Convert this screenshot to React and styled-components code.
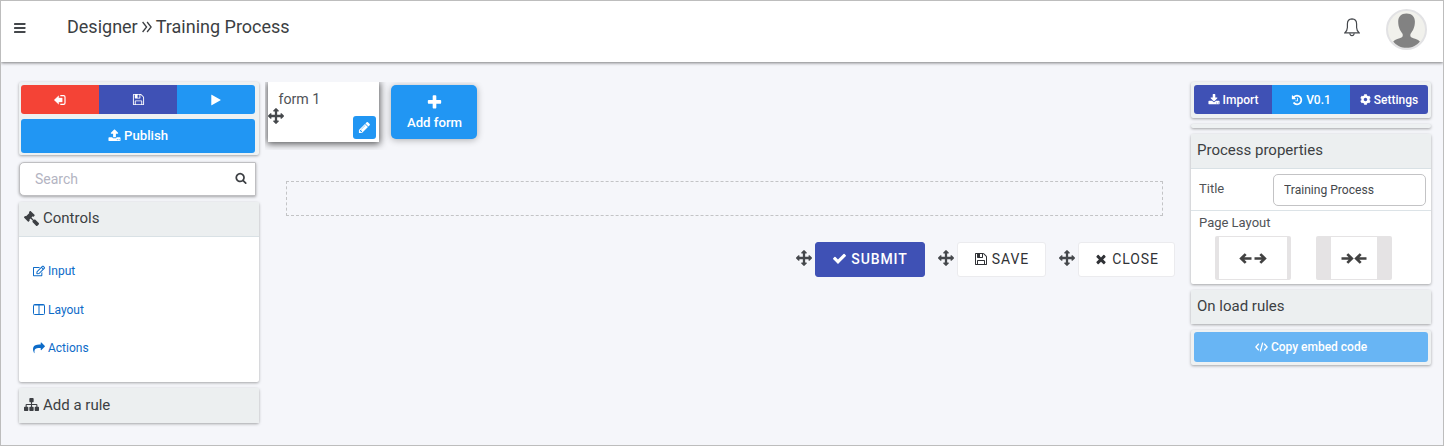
import React from "react";
import styled, { createGlobalStyle } from "styled-components";
import { FaGavel, FaRegEdit, FaCog } from "react-icons/fa";

const GlobalStyle = createGlobalStyle`
  *, *::before, *::after { box-sizing: border-box; }
  body { margin: 0; font-family: Roboto, "Liberation Sans", sans-serif; color: #3c3f43; }
  button { font-family: inherit; cursor: pointer; }
`;

const blue = "#2196f3";
const indigo = "#3f51b5";
const red = "#f44336";
const panelShadow = "0 1px 3px rgba(0,0,0,.34)";

/* ---------- icons ---------- */

const paths = {
  move: "M1792 896q0 26-19 45l-256 256q-19 19-45 19t-45-19-19-45v-128h-384v384h128q26 0 45 19t19 45-19 45l-256 256q-19 19-45 19t-45-19l-256-256q-19-19-19-45t19-45 45-19h128v-384h-384v128q0 26-19 45t-45 19-45-19l-256-256q-19-19-19-45t19-45l256-256q19-19 45-19t45 19 19 45v128h384v-384h-128q-26 0-45-19t-19-45 19-45l256-256q19-19 45-19t45 19l256 256q19 19 19 45t-19 45-45 19h-128v384h384v-128q0-26 19-45t45-19 45 19l256 256q19 19 19 45z",
  save: "M512 1536h768v-384h-768v384zm896 0h128v-896q0-14-10-38.5t-20-34.5l-281-281q-10-10-34-20t-39-10v416q0 40-28 68t-68 28h-576q-40 0-68-28t-28-68v-416h-128v1280h128v-416q0-40 28-68t68-28h832q40 0 68 28t28 68v416zm-384-928v-320q0-13-9.5-22.5t-22.5-9.5h-192q-13 0-22.5 9.5t-9.5 22.5v320q0 13 9.5 22.5t22.5 9.5h192q13 0 22.5-9.5t9.5-22.5zm640 32v928q0 40-28 68t-68 28h-1344q-40 0-68-28t-28-68v-1344q0-40 28-68t68-28h928q40 0 88 20t76 48l280 280q28 28 48 76t20 88z",
  check: "M1671 566q0 40-28 68l-724 724-136 136q-28 28-68 28t-68-28l-136-136-362-362q-28-28-28-68t28-68l136-136q28-28 68-28t68 28l294 295 656-657q28-28 68-28t68 28l136 136q28 28 28 68z",
  times: "M1490 1322q0 40-28 68l-136 136q-28 28-68 28t-68-28l-294-294-294 294q-28 28-68 28t-68-28l-136-136q-28-28-28-68t28-68l294-294-294-294q-28-28-28-68t28-68l136-136q28-28 68-28t68 28l294 294 294-294q28-28 68-28t68 28l136 136q28 28 28 68t-28 68l-294 294 294 294q28 28 28 68z",
  plus: "M1600 736v192q0 40-28 68t-68 28h-416v416q0 40-28 68t-68 28h-192q-40 0-68-28t-28-68v-416h-416q-40 0-68-28t-28-68v-192q0-40 28-68t68-28h416v-416q0-40 28-68t68-28h192q40 0 68 28t28 68v416h416q40 0 68 28t28 68z",
  search: "M1216 832q0-185-131.5-316.5t-316.5-131.5-316.5 131.5-131.5 316.5 131.5 316.5 316.5 131.5 316.5-131.5 131.5-316.5zm512 832q0 52-38 90t-90 38q-54 0-90-38l-343-342q-179 124-399 124-143 0-273.5-55.5t-225-150-150-225-55.5-273.5 55.5-273.5 150-225 225-150 273.5-55.5 273.5 55.5 225 150 150 225 55.5 273.5q0 220-124 399l343 343q37 37 37 90z",
  share: "M1792 640q0 26-19 45l-512 512q-19 19-45 19t-45-19-19-45v-256h-224q-98 0-175.5 6t-154 21.5-133 42.5-105.5 69.5-80 101-48.5 138.5-17.5 181q0 55 5 123 0 6 2.5 23.5t2.5 26.5q0 15-8.5 25t-23.5 10q-16 0-28-17-7-9-13-22t-13.5-30-10.5-24q-127-285-127-451 0-199 53-333 162-403 875-403h224v-256q0-26 19-45t45-19 45 19l512 512q19 19 19 45z",
  sitemap: "M1792 1248v320q0 40-28 68t-68 28h-320q-40 0-68-28t-28-68v-320q0-40 28-68t68-28h96v-192h-512v192h96q40 0 68 28t28 68v320q0 40-28 68t-68 28h-320q-40 0-68-28t-28-68v-320q0-40 28-68t68-28h96v-192h-512v192h96q40 0 68 28t28 68v320q0 40-28 68t-68 28h-320q-40 0-68-28t-28-68v-320q0-40 28-68t68-28h96v-192q0-52 38-90t90-38h512v-192h-96q-40 0-68-28t-28-68v-320q0-40 28-68t68-28h320q40 0 68 28t28 68v320q0 40-28 68t-68 28h-96v192h512q52 0 90 38t38 90v192h96q40 0 68 28t28 68z",
  upload: "M1344 1472q0-26-19-45t-45-19-45 19-19 45 19 45 45 19 45-19 19-45zm256 0q0-26-19-45t-45-19-45 19-19 45 19 45 45 19 45-19 19-45zm128-224v320q0 40-28 68t-68 28h-1472q-40 0-68-28t-28-68v-320q0-40 28-68t68-28h427q21 56 70.5 92t110.5 36h256q61 0 110.5-36t70.5-92h427q40 0 68 28t28 68zm-325-648q-17 40-59 40h-256v448q0 26-19 45t-45 19h-256q-26 0-45-19t-19-45v-448h-256q-42 0-59-40-17-39 14-69l448-448q18-19 45-19t45 19l448 448q31 30 14 69z",
  download: "M1344 1344q0-26-19-45t-45-19-45 19-19 45 19 45 45 19 45-19 19-45zm256 0q0-26-19-45t-45-19-45 19-19 45 19 45 45 19 45-19 19-45zm128-224v320q0 40-28 68t-68 28h-1472q-40 0-68-28t-28-68v-320q0-40 28-68t68-28h465l135 136q58 56 136 56t136-56l136-136h464q40 0 68 28t28 68zm-325-569q17 41-14 70l-448 448q-18 19-45 19t-45-19l-448-448q-31-29-14-70 17-39 59-39h256v-448q0-26 19-45t45-19h256q26 0 45 19t19 45v448h256q42 0 59 39z",
  play: "M1576 927l-1328 738q-23 13-39.5 3t-16.5-36v-1472q0-26 16.5-36t39.5 3l1328 738q23 13 23 31t-23 31z",
  pencil: "M491 1536l91-91-235-235-91 91v107h128v128h107zm523-928q0-22-22-22-10 0-17 7l-542 542q-7 7-7 17 0 22 22 22 10 0 17-7l542-542q7-7 7-17zm-54-192l416 416-832 832h-416v-416zm683 96q0 53-37 90l-166 166-416-416 166-165q36-38 90-38 53 0 91 38l235 234q37 39 37 91z",
  history: "M1664 896q0 156-61 298t-164 245-245 164-298 61q-172 0-327-72.5t-264-204.5q-7-10-6.5-22.5t8.5-20.5l137-138q10-9 25-9 16 2 23 12 73 95 179 147t225 52q104 0 198.5-40.5t163.5-109.5 109.5-163.5 40.5-198.5-40.5-198.5-109.5-163.5-163.5-109.5-198.5-40.5q-98 0-188 35.5t-160 101.5l137 138q31 30 14 69-17 40-59 40h-448q-26 0-45-19t-19-45v-448q0-42 40-59 39-17 69 14l130 129q107-101 244.5-156.5t284.5-55.5q156 0 298 61t245 164 164 245 61 298zm-640-288v448q0 14-9 23t-23 9h-320q-14 0-23-9t-9-23v-64q0-14 9-23t23-9h224v-352q0-14 9-23t23-9h64q14 0 23 9t9 23z",
};

const Svg = styled.svg`
  display: block;
  flex: none;
`;

const MirroredGavel = styled(FaGavel)`
  flex: none;
  transform: scaleX(-1);
`;

const Icon = ({ name, size = 14 }) => (
  <Svg width={size} height={size} viewBox="0 0 1792 1792" fill="currentColor">
    <path d={paths[name]} />
  </Svg>
);

const MenuIcon = () => (
  <Svg width="12" height="10" viewBox="0 0 12 10" fill="#44474b">
    <rect width="11.500" height="1.900" rx=".4" />
    <rect y="4" width="11.500" height="1.900" rx=".4" />
    <rect y="8" width="11.500" height="1.900" rx=".4" />
  </Svg>
);

const ChevronsIcon = () => (
  <Svg width="10" height="12" viewBox="0 0 10 12" fill="none" stroke="currentColor" strokeWidth="1.3">
    <path d="M.6 1l4 5-4 5M5.1 1l4 5-4 5" />
  </Svg>
);

const BellIcon = () => (
  <Svg width="16" height="19" viewBox="0 0 16 19" fill="none" stroke="#45484c" strokeWidth="1.2">
    <path d="M8 .9C4.9 1 3.4 3.2 3.4 6v3.5c0 2.3-.8 3.7-2.6 5.4h14.4c-1.800-1.700-2.600-3.100-2.600-5.400V6C12.600 3.200 11.100 1 8 .9z" />
    <path d="M5.800 15.200c.2 1.700 1 2.500 2.200 2.500s2-.8 2.200-2.500" />
  </Svg>
);

const AvatarIcon = () => (
  <Svg width="41" height="41" viewBox="0 0 41 41">
    <circle cx="20.500" cy="20.500" r="19.500" fill="#f1f1ec" stroke="#e2e2e4" strokeWidth="2" />
    <path
      d="M20.500 4.500c-5.400 0-8.300 3.400-8.300 8.100 0 5.700 2 9.200 4 11.600.8 1 .9 3.300-.3 4-2.700 1.400-6.700 1.800-8.700 4.300 3.200 4.100 8 6.300 13.300 6.300s10.200-2.200 13.400-6.300c-2-2.500-6-2.900-8.700-4.300-1.200-.7-1.100-3-.3-4 2-2.400 4-5.900 4-11.600 0-4.700-3-8.100-8.400-8.100z"
      fill="#828282"
    />
  </Svg>
);

const ExitIcon = () => (
  <Svg width="12" height="10" viewBox="0 0 12 10">
    <path d="M.2 5l4.500-4.200v2.300h3.500v3.800H4.700v2.300z" fill="#fff" stroke="#fff" strokeWidth=".4" strokeLinejoin="round" />
    <path d="M6.300.7h3.300c.8 0 1.400.5 1.400 1.300v6c0 .8-.6 1.300-1.400 1.300H6.300" fill="none" stroke="#fff" strokeWidth="1.200" />
  </Svg>
);

const ColumnsIcon = () => (
  <Svg width="12" height="11" viewBox="0 0 12 11" fill="none" stroke="currentColor">
    <rect x=".5" y=".5" width="11" height="10" rx="1" />
    <path d="M6 1v9.500M1 1h10" />
  </Svg>
);

const CodeIcon = () => (
  <Svg width="13" height="10" viewBox="0 0 13 10" fill="none" stroke="currentColor" strokeWidth="1.300">
    <path d="M3.800 1.700L.9 5l2.900 3.300M9.200 1.700L12.100 5 9.200 8.300M7.700.6L5.300 9.400" />
  </Svg>
);

const ArrowIcon = ({ right }) => (
  <Svg width="13" height="11" viewBox="0 0 13 11" fill="none" stroke="#424242" strokeWidth="2.700">
    <path d={right ? "M.5 5.500h9.500M6.300 1.100l4.500 4.400-4.500 4.400" : "M12.500 5.500H3M6.700 1.100L2.200 5.500l4.500 4.400"} />
    <path d={right ? "M8 3.500l3.500 2L8 7.500z" : "M5 3.500l-3.500 2L5 7.500z"} fill="#424242" stroke="none" />
  </Svg>
);

/* ---------- page frame ---------- */

const Page = styled.div`
  width: 1444px;
  height: 446px;
  border: 1px solid #bdbdbd;
  background: #f5f6fa;
  overflow: hidden;
  display: flex;
  flex-direction: column;
`;

const Header = styled.header`
  flex: none;
  height: 61px;
  padding: 0 16px 5px 13px;
  display: flex;
  align-items: center;
  background: #fff;
  box-shadow: 0 1px 3px rgba(0, 0, 0, 0.5);
`;

const Title = styled.h1`
  margin: -4px auto 0 41px;
  display: flex;
  align-items: center;
  gap: 4px;
  font-size: 18px;
  line-height: 24px;
  font-weight: 400;
  white-space: nowrap;
`;

const HeaderMenu = styled.div`
  margin-top: -2px;
`;

const Bell = styled.div`
  margin: -3px 26px 0 0;
`;

const Workspace = styled.div`
  flex: 1;
  display: grid;
  grid-template-columns: 240px 920px 240px;
  column-gap: 6px;
  padding: 20px 0 0 18px;
  align-items: start;
`;

const Side = styled.aside`
  display: flex;
  flex-direction: column;
  gap: 6px;
`;

const Panel = styled.section`
  height: ${(p) => p.$h}px;
  flex: none;
  background: ${(p) => p.$bg || "#eef1f2"};
  border-radius: 2px;
  box-shadow: ${panelShadow};
`;

const ButtonPanel = styled(Panel)`
  padding: ${(p) => p.$pad || "3px 4px 0 2px"};
  display: flex;
  flex-direction: column;
  gap: 5px;
`;

const Segments = styled.div`
  display: grid;
  grid-template-columns: 1fr 1fr 1fr;
  height: 29px;
  border-radius: 3px;
  overflow: hidden;
`;

const Segment = styled.button`
  border: 0;
  padding: 0;
  display: flex;
  align-items: center;
  justify-content: center;
  gap: 3px;
  color: #fff;
  background: ${(p) => p.$color};
  font-size: 12px;
  font-weight: 500;
  white-space: nowrap;
`;

const WideButton = styled(Segment)`
  height: ${(p) => p.$h}px;
  padding-bottom: ${(p) => p.$lift || 0}px;
  border-radius: 3px;
  font-size: ${(p) => p.$size}px;
`;

const SearchBox = styled.label`
  height: 34px;
  margin: 1px 3px 0 0;
  padding: 0 8px 2px 15px;
  display: flex;
  align-items: center;
  justify-content: space-between;
  background: #fff;
  border: 1px solid #bfbfc2;
  border-radius: 5px 1px 1px 5px;
  box-shadow: ${panelShadow};
`;

const SearchInput = styled.input`
  width: 160px;
  padding: 2px 0 0;
  border: 0;
  outline: 0;
  background: none;
  font: 400 14px/20px Roboto, sans-serif;
  &::placeholder { color: #b3b4c2; opacity: 1; }
`;

const PanelHeading = styled.h2`
  margin: 0;
  height: ${(p) => p.$h || 35}px;
  padding: 0 6px ${(p) => p.$lift || 2}px ${(p) => p.$left || 5}px;
  display: flex;
  align-items: center;
  gap: 4px;
  background: #eceff0;
  font-size: 15px;
  font-weight: 400;
  white-space: nowrap;
  border-bottom: ${(p) => (p.$line ? "1px solid #d9e1e5" : "0")};
`;

const ControlList = styled.nav`
  padding: 22px 14px 0;
  display: flex;
  flex-direction: column;
  gap: 14.500px;
`;

const ControlLink = styled.a`
  height: 24px;
  display: flex;
  align-items: center;
  gap: 3px;
  color: #0d6bc8;
  font-size: 12px;
  white-space: nowrap;
`;

/* ---------- canvas ---------- */

const Canvas = styled.main`
  display: flex;
  flex-direction: column;
`;

const FormStrip = styled.div`
  height: 68px;
  padding: 0 3px;
  display: flex;
  gap: 12px;
  overflow: hidden;
`;

const FormCard = styled.div`
  position: relative;
  width: 111px;
  height: 60px;
  padding: 8px 0 0 10.500px;
  background: #fff;
  box-shadow: 0 1px 7px 1px rgba(0, 0, 0, 0.65);
  font-size: 14.200px;
  line-height: 18px;
  color: #505357;
`;

const CardHandle = styled.span`
  position: absolute;
  left: 0;
  top: 26px;
  color: #45484c;
`;

const EditButton = styled.button`
  position: absolute;
  right: 3px;
  bottom: 3px;
  width: 23px;
  height: 23px;
  padding: 0;
  display: grid;
  place-items: center;
  border: 0;
  border-radius: 3px;
  color: #fff;
  background: ${blue};
`;

const AddForm = styled.button`
  width: 86px;
  height: 54px;
  margin-top: 3px;
  padding: 9px 0 0 1px;
  display: flex;
  flex-direction: column;
  align-items: center;
  gap: 1px;
  border: 0;
  border-radius: 5px;
  color: #fff;
  background: ${blue};
  box-shadow: 0 1px 7px rgba(0, 0, 0, 0.3);
  font-size: 13.200px;
  font-weight: 500;
  line-height: 21px;
`;

const DropZone = styled.div`
  width: 877px;
  height: 35px;
  margin: 31px 0 0 21px;
  border: 1px dashed #c3c4c6;
`;

const Actions = styled.div`
  margin: 26px 10px 0 0;
  display: flex;
  justify-content: flex-end;
  gap: 13px;
`;

const ActionItem = styled.div`
  display: flex;
  align-items: center;
  gap: 3px;
  color: #45484c;
`;

const Handle = styled.span`
  margin-top: -4px;
`;

const ActionButton = styled.button`
  width: ${(p) => p.$w}px;
  height: 35px;
  padding: 0 0 2px;
  display: flex;
  align-items: center;
  justify-content: center;
  gap: 4px;
  border: 1px solid ${(p) => (p.$primary ? indigo : "#ebebee")};
  border-radius: 3px;
  color: ${(p) => (p.$primary ? "#fff" : "#303236")};
  background: ${(p) => (p.$primary ? indigo : "#fff")};
  font-size: 14px;
  font-weight: ${(p) => (p.$primary ? 500 : 400)};
  letter-spacing: 0.900px;
`;

/* ---------- properties ---------- */

const PropertyRow = styled.div`
  height: 42px;
  padding: 0 5px 0 8px;
  display: flex;
  align-items: center;
  justify-content: space-between;
  border-bottom: 1px solid #dce3e7;
  font-size: 13px;
  color: #505357;
`;

const PropertyLabel = styled.span`
  margin-top: -3px;
`;

const PropertyInput = styled.input`
  width: 153px;
  height: 32px;
  padding: 0 10px;
  border: 1px solid #c3c3c5;
  border-radius: 5px;
  outline: 0;
  background: #fff;
  color: #45484c;
  font: 400 12.100px Roboto, sans-serif;
`;

const LayoutBlock = styled.div`
  padding: 3px 8px 0;
  font-size: 13px;
  line-height: 17px;
  color: #505357;
`;

const LayoutOptions = styled.div`
  margin: 5px 0 0 16px;
  display: flex;
  gap: 25px;
`;

const LayoutOption = styled.button`
  width: 76px;
  height: 44px;
  padding: 0;
  display: flex;
  align-items: center;
  justify-content: center;
  gap: ${(p) => (p.$narrow ? 0 : 2)}px;
  background: #fff;
  border: solid #e5e3e4;
  border-width: 1px ${(p) => (p.$narrow ? 15 : 4)}px;
  border-radius: 2px;
`;

export default function App() {
  return (
    <>
      <GlobalStyle />
      <Page>
        <Header>
          <HeaderMenu><MenuIcon /></HeaderMenu>
          <Title>
            <span>Designer</span>
            <ChevronsIcon />
            <span>Training Process</span>
          </Title>
          <Bell><BellIcon /></Bell>
          <AvatarIcon />
        </Header>

        <Workspace>
          <Side>
            <ButtonPanel $h={73}>
              <Segments>
                <Segment $color={red}><ExitIcon /></Segment>
                <Segment $color={indigo}><Icon name="save" size={13} /></Segment>
                <Segment $color={blue}><Icon name="play" size={12} /></Segment>
              </Segments>
              <WideButton $color={blue} $h={34} $size={13.2} $lift={1}>
                <Icon name="upload" size={13} />Publish
              </WideButton>
            </ButtonPanel>
            <SearchBox>
              <SearchInput placeholder="Search" />
              <Icon name="search" size={12} />
            </SearchBox>
            <Panel $h={180} $bg="#fff">
              <PanelHeading $line><MirroredGavel size={15} />Controls</PanelHeading>
              <ControlList>
                <ControlLink><FaRegEdit size={12} />Input</ControlLink>
                <ControlLink><ColumnsIcon />Layout</ControlLink>
                <ControlLink><Icon name="share" size={12} />Actions</ControlLink>
              </ControlList>
            </Panel>
            <Panel $h={35}>
              <PanelHeading><Icon name="sitemap" size={15} />Add a rule</PanelHeading>
            </Panel>
          </Side>

          <Canvas>
            <FormStrip>
              <FormCard>
                form 1
                <CardHandle><Icon name="move" size={16} /></CardHandle>
                <EditButton><Icon name="pencil" size={13} /></EditButton>
              </FormCard>
              <AddForm><Icon name="plus" size={17} />Add form</AddForm>
            </FormStrip>
            <DropZone />
            <Actions>
              <ActionItem>
                <Handle><Icon name="move" size={16} /></Handle>
                <ActionButton $w={110} $primary><Icon name="check" size={15} />SUBMIT</ActionButton>
              </ActionItem>
              <ActionItem>
                <Handle><Icon name="move" size={16} /></Handle>
                <ActionButton $w={89}><Icon name="save" size={14} />SAVE</ActionButton>
              </ActionItem>
              <ActionItem>
                <Handle><Icon name="move" size={16} /></Handle>
                <ActionButton $w={97}><Icon name="times" size={14} />CLOSE</ActionButton>
              </ActionItem>
            </Actions>
          </Canvas>

          <Side>
            <ButtonPanel $h={36} $pad="3px 3px 0">
              <Segments>
                <Segment $color={indigo}><Icon name="download" size={12} />Import</Segment>
                <Segment $color={blue}><Icon name="history" size={12} />V0.1</Segment>
                <Segment $color={indigo}><FaCog size={11} />Settings</Segment>
              </Segments>
            </ButtonPanel>
            <Panel $h={4} />
            <Panel $h={150} $bg="#fff">
              <PanelHeading $line $left={6}>Process properties</PanelHeading>
              <PropertyRow>
                <PropertyLabel>Title</PropertyLabel>
                <PropertyInput defaultValue="Training Process" />
              </PropertyRow>
              <LayoutBlock>
                Page Layout
                <LayoutOptions>
                  <LayoutOption><ArrowIcon /><ArrowIcon right /></LayoutOption>
                  <LayoutOption $narrow><ArrowIcon right /><ArrowIcon /></LayoutOption>
                </LayoutOptions>
              </LayoutBlock>
            </Panel>
            <Panel $h={34}>
              <PanelHeading $h={34} $lift={3} $left={6}>On load rules</PanelHeading>
            </Panel>
            <ButtonPanel $h={35} $pad="2px 3px 0">
              <WideButton $color="#68b5f4" $h={30} $size={12} $lift={1}><CodeIcon />Copy embed code</WideButton>
            </ButtonPanel>
          </Side>
        </Workspace>
      </Page>
    </>
  );
}
